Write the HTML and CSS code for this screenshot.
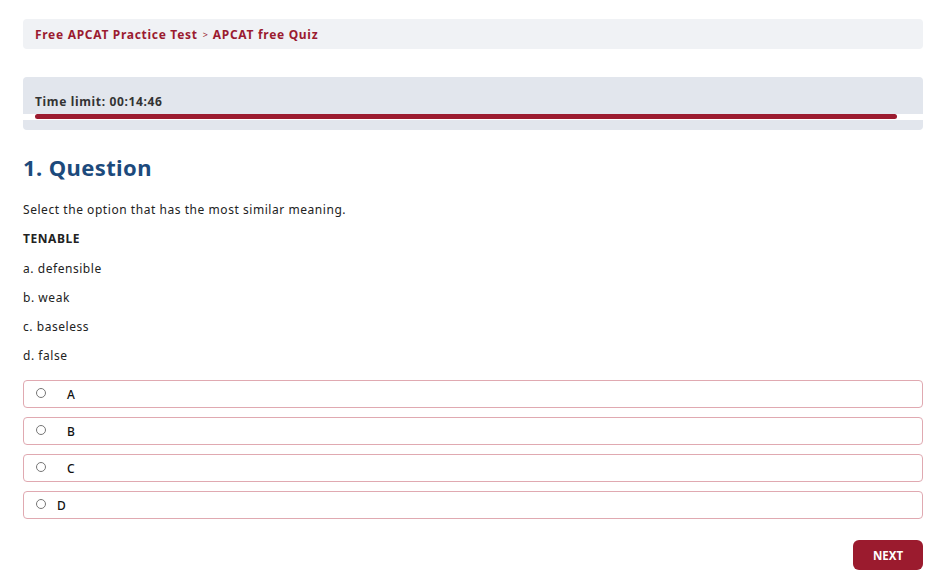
FILE: index.html
```html
<!DOCTYPE html>
<html lang="en">
<head>
    <meta charset="UTF-8">
    <meta name="viewport" content="width=device-width, initial-scale=1.0">
    <title>APCAT free Quiz</title>
    <link rel="stylesheet" href="styles.css">
</head>
<body>
    <div class="container">
        <div class="breadcrumb">
            <a href="#">Free APCAT Practice Test</a>
            <span class="sep">&gt;</span>
            <a href="#">APCAT free Quiz</a>
        </div>

        <div class="timer">
            <div class="timer-label">Time limit: 00:14:46</div>
            <div class="timer-track">
                <div class="timer-bar"></div>
            </div>
        </div>

        <h2 class="question-title">1. Question</h2>

        <div class="question-text">
            <p>Select the option that has the most similar meaning.</p>
            <p class="word">TENABLE</p>
            <p>a. defensible</p>
            <p>b. weak</p>
            <p>c. baseless</p>
            <p>d. false</p>
        </div>

        <ul class="answers">
            <li class="answer"><label><input type="radio" name="q1"><span class="letter pad">A</span></label></li>
            <li class="answer"><label><input type="radio" name="q1"><span class="letter pad">B</span></label></li>
            <li class="answer"><label><input type="radio" name="q1"><span class="letter pad">C</span></label></li>
            <li class="answer"><label><input type="radio" name="q1"><span class="letter">D</span></label></li>
        </ul>

        <div class="actions">
            <button class="next-button">NEXT</button>
        </div>
    </div>
</body>
</html>
```

FILE: styles.css
```css
* {
    margin: 0;
    padding: 0;
    box-sizing: border-box;
}

body {
    font-family: 'Noto Sans', 'Open Sans', sans-serif;
    color: #222;
    background: #fff;
}

.container {
    width: 900px;
    margin-left: 23px;
    padding-top: 19px;
}

.breadcrumb {
    background: #f0f2f5;
    border-radius: 4px;
    height: 30px;
    padding: 0 12px;
    display: flex;
    align-items: center;
    gap: 5px;
    font-size: 12px;
    font-weight: 700;
    letter-spacing: 0.7px;
}

.breadcrumb a {
    color: #9b1b30;
    text-decoration: none;
}

.breadcrumb .sep {
    color: #9b1b30;
    font-size: 9px;
    font-weight: 400;
    letter-spacing: 0;
}

.timer {
    margin-top: 28px;
    background: #e2e6ed;
    border-radius: 4px;
    height: 53px;
    padding-top: 16px;
}

.timer-label {
    font-size: 12px;
    font-weight: 700;
    color: #333;
    padding-left: 12px;
    letter-spacing: 0.65px;
}

.timer-track {
    margin-top: 4px;
    height: 6px;
    background: #fff;
    padding: 0 26px 0 12px;
}

.timer-bar {
    height: 5px;
    background: #9b1b30;
    border-radius: 3px;
}

.question-title {
    margin-top: 22px;
    font-size: 22px;
    font-weight: 700;
    color: #1c4a7c;
    letter-spacing: 0.4px;
}

.question-text {
    margin-top: 20px;
    font-size: 12px;
    letter-spacing: 0.55px;
}

.question-text p {
    line-height: 16px;
    margin-bottom: 13.3px;
}

.question-text p:last-child {
    margin-bottom: 0;
}

.question-text .word {
    font-weight: 700;
}

.answers {
    list-style: none;
    display: flex;
    flex-direction: column;
    gap: 9px;
    margin-top: 16px;
}

.answer label {
    display: flex;
    align-items: center;
    height: 28px;
    border: 1px solid #e0a9b1;
    border-radius: 4px;
    padding-left: 12px;
    font-size: 12px;
    font-weight: 500;
    color: #111;
    cursor: pointer;
}

.answer input {
    width: 10px;
    height: 10px;
    margin: -2px 11px 0 0;
    accent-color: #9b1b30;
}

.answer .letter.pad {
    padding-left: 10px;
}

.actions {
    display: flex;
    justify-content: flex-end;
    margin-top: 21px;
}

.next-button {
    background: #9b1b2e;
    color: #fff;
    border: none;
    border-radius: 6px;
    width: 70px;
    height: 30px;
    font-family: inherit;
    font-size: 11.5px;
    font-weight: 700;
    cursor: pointer;
}
```
